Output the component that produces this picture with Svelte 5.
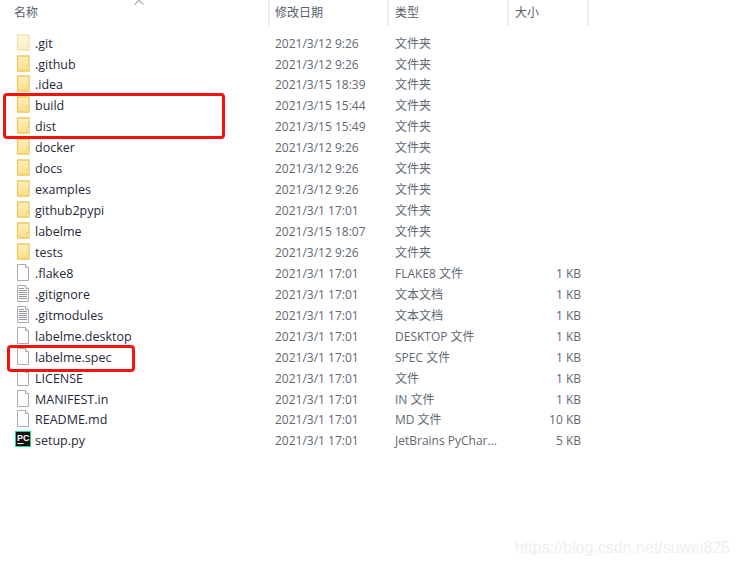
<script>
  const F = '文件夹';
  const files = [
    { name: '.git', date: '2021/3/12 9:26', type: F, icon: 'hidden' },
    { name: '.github', date: '2021/3/12 9:26', type: F, icon: 'folder' },
    { name: '.idea', date: '2021/3/15 18:39', type: F, icon: 'folder' },
    { name: 'build', date: '2021/3/15 15:44', type: F, icon: 'folder' },
    { name: 'dist', date: '2021/3/15 15:49', type: F, icon: 'folder' },
    { name: 'docker', date: '2021/3/12 9:26', type: F, icon: 'folder' },
    { name: 'docs', date: '2021/3/12 9:26', type: F, icon: 'folder' },
    { name: 'examples', date: '2021/3/12 9:26', type: F, icon: 'folder' },
    { name: 'github2pypi', date: '2021/3/1 17:01', type: F, icon: 'folder' },
    { name: 'labelme', date: '2021/3/15 18:07', type: F, icon: 'folder' },
    { name: 'tests', date: '2021/3/12 9:26', type: F, icon: 'folder' },
    { name: '.flake8', date: '2021/3/1 17:01', type: 'FLAKE8 文件', size: '1 KB', icon: 'file' },
    { name: '.gitignore', date: '2021/3/1 17:01', type: '文本文档', size: '1 KB', icon: 'text' },
    { name: '.gitmodules', date: '2021/3/1 17:01', type: '文本文档', size: '1 KB', icon: 'text' },
    { name: 'labelme.desktop', date: '2021/3/1 17:01', type: 'DESKTOP 文件', size: '1 KB', icon: 'file' },
    { name: 'labelme.spec', date: '2021/3/1 17:01', type: 'SPEC 文件', size: '1 KB', icon: 'file' },
    { name: 'LICENSE', date: '2021/3/1 17:01', type: '文件', size: '1 KB', icon: 'file' },
    { name: 'MANIFEST.in', date: '2021/3/1 17:01', type: 'IN 文件', size: '1 KB', icon: 'file' },
    { name: 'README.md', date: '2021/3/1 17:01', type: 'MD 文件', size: '10 KB', icon: 'file' },
    { name: 'setup.py', date: '2021/3/1 17:01', type: 'JetBrains PyChar...', size: '5 KB', icon: 'pc' }
  ];
</script>

<div class="explorer">
  <svg class="sort" width="12" height="5" viewBox="0 0 12 5"><path d="M1.500 4.500 6 .5l4.500 4" fill="none" stroke="#7d8288" /></svg>
  <div class="head">
    <div class="col name">名称</div>
    <div class="col date">修改日期</div>
    <div class="col type">类型</div>
    <div class="col size">大小</div>
  </div>

  <div class="list">
    {#each files as f}
      <div class="row">
        <div class="icon">
          {#if f.icon === 'folder' || f.icon === 'hidden'}
            <svg class:faded={f.icon === 'hidden'} width="16" height="17" viewBox="0 0 16 17">
              <defs>
                <linearGradient id="fold" x1="0" y1="0" x2="0" y2="1">
                  <stop offset="0" stop-color="#fff0bd" />
                  <stop offset="1" stop-color="#fddf88" />
                </linearGradient>
              </defs>
              <path d="M2.500 1h11.500v15H2.500z" fill="url(#fold)" stroke="#ecc962" stroke-width="1.300" />
              <path d="M12 10.500h2v5.500h-2z" fill="#fff8dc" stroke="#ecc962" />
            </svg>
          {:else if f.icon === 'pc'}
            <svg class="pc-icon" width="16" height="16" viewBox="0 0 16 16">
              <rect x=".5" y=".5" width="15" height="15" fill="#111" stroke="#21d789" />
              <rect x="2.500" y="12" width="6" height="1" fill="#fff" />
              <text x="2" y="9.500" class="pc">PC</text>
            </svg>
          {:else}
            <svg width="16" height="17" viewBox="0 0 16 17">
              <path d="M2.500 .5h8l3 3v13h-11z" fill="#fdfdfd" stroke="#a9adb2" />
              <path d="M10.500 .5v3h3" fill="#eef0f2" stroke="#a9adb2" />
              {#if f.icon === 'text'}
                <path d="M4 3.500h5M4 5.500h8M4 7.500h8M4 9.500h8M4 11.500h8M4 13.500h8" stroke="#8f959b" />
              {/if}
            </svg>
          {/if}
        </div>
        <div class="col name fname">{f.name}</div>
        <div class="col date">{f.date}</div>
        <div class="col type">{f.type}</div>
        <div class="col size num">{f.size ?? ''}</div>
      </div>
    {/each}
  </div>

  <div class="mark mark-a"></div>
  <div class="mark mark-b"></div>
  <div class="watermark">https://blog.csdn.net/suwei825</div>
</div>

<style>
  :global(body) {
    margin: 0;
    background: #fff;
  }

  .explorer {
    position: relative;
    width: 738px;
    height: 566px;
    overflow: hidden;
    background: #fff;
    font-family: "Open Sans", "Noto Sans CJK SC", sans-serif;
    font-size: 12px;
    color: #5f6873;
  }

  .sort {
    position: absolute;
    left: 133px;
    top: 0;
  }

  .head {
    display: flex;
    height: 26px;
    line-height: 25px;
    color: #56606c;
  }

  .head .col {
    border-right: 2px solid #eceef0;
    box-sizing: border-box;
    padding-left: 6px;
  }

  .name {
    width: 270px;
    flex: none;
  }

  .head .name {
    padding-left: 14px;
  }

  .date {
    width: 119px;
    flex: none;
  }

  .head .date,
  .row .date {
    padding-left: 5px;
  }

  .type {
    width: 120px;
    flex: none;
  }

  .size {
    width: 80px;
    flex: none;
  }

  .list {
    padding-top: 6.620px;
  }

  .row {
    display: flex;
    height: 20.950px;
    line-height: 21px;
    position: relative;
    white-space: nowrap;
  }

  .row .date,
  .row .type {
    box-sizing: border-box;
  }

  .row .type {
    padding-left: 6px;
  }

  .icon {
    position: absolute;
    left: 15px;
    top: 1px;
    line-height: 0;
  }

  .fname {
    padding-left: 35px;
    box-sizing: border-box;
    color: #1f2a3a;
    font-size: 12.500px;
  }

  .num {
    box-sizing: border-box;
    text-align: right;
    padding-right: 8px;
  }

  .faded {
    opacity: 0.5;
  }

  .pc {
    font-family: "Liberation Sans", sans-serif;
    font-size: 9px;
    font-weight: 700;
    fill: #fff;
  }

  .mark {
    position: absolute;
    border: 3px solid #f5120c;
    border-radius: 4px;
    box-sizing: border-box;
  }

  .mark-a {
    left: 3px;
    top: 93px;
    width: 222px;
    height: 46px;
  }

  .mark-b {
    left: 7px;
    top: 345px;
    width: 128px;
    height: 27px;
  }

  .watermark {
    position: absolute;
    left: 515px;
    top: 539px;
    font-family: "Liberation Sans", sans-serif;
    font-size: 16px;
    color: #efefef;
    white-space: nowrap;
  }
</style>
